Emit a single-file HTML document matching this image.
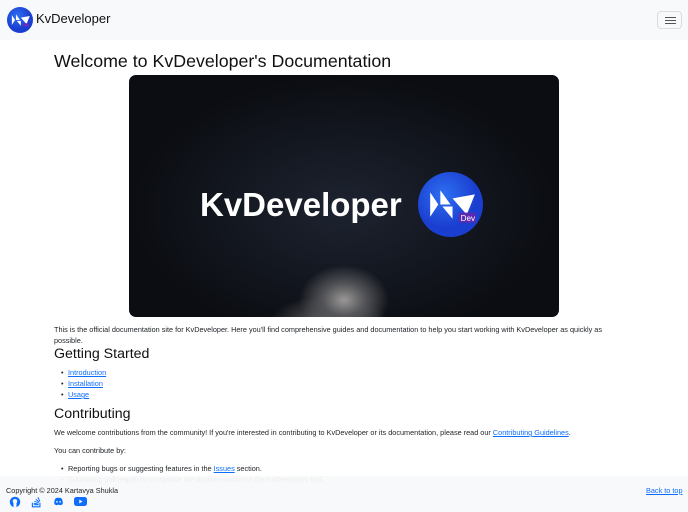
<!DOCTYPE html>
<html><head><meta charset="utf-8"><style>
*{box-sizing:border-box;margin:0;padding:0}
html,body{width:688px;height:512px;overflow:hidden;background:#fff;font-family:"Liberation Sans",sans-serif;color:#212529}
.nav{position:absolute;left:0;top:0;width:688px;height:40px;background:#f8f9fa}
.logo{position:absolute;left:7px;top:7px;width:26px;height:26px}
.brand{position:absolute;left:36px;top:11px;font-size:13px;color:#111}
.tog{position:absolute;left:657px;top:11px;width:25px;height:18px;border:1px solid #dcdcdc;border-radius:4px}
.tog i{position:absolute;left:7px;width:11px;height:1.3px;background:#555}
h1{position:absolute;left:54px;top:51px;font-size:17.8px;font-weight:400;color:#111}
.hero{position:absolute;left:129px;top:75px;width:430px;height:242px;border-radius:7px;overflow:hidden;background:radial-gradient(ellipse 45px 35px at 215px 225px,#9a9896 0%,#55565a 45%,transparent 100%),radial-gradient(ellipse 60px 30px at 200px 250px,#6a6a6a 0%,transparent 100%),radial-gradient(ellipse at 50% 55%,#1d2330,#0b0d12 70%)}
.hero .t{position:absolute;left:71px;top:111px;font-size:33px;font-weight:700;color:#fff}
.hero svg{position:absolute;left:289px;top:97px;width:65px;height:65px}
.p{position:absolute;left:54px;font-size:7.3px;line-height:11px}
h2{position:absolute;left:54px;font-size:14.2px;font-weight:400;color:#111}
a{color:#0d6efd;text-decoration:underline}
ul{position:absolute;left:68px;font-size:7.3px;line-height:11px;list-style:none}
ul li:before{content:"•";position:absolute;left:-7px}
.foot{position:absolute;left:0;top:476px;width:688px;height:36px;background:rgba(248,249,250,.95)}
.foot .c{position:absolute;left:6px;top:10px;font-size:7.3px}
.foot .b{position:absolute;left:646px;top:10px;font-size:7.3px}
.ic{position:absolute;top:21px;width:11px;height:9px}
</style></head><body>
<div class="nav"><svg class="logo" viewBox="0 0 64 64"><defs><radialGradient id="g" cx=".4" cy=".35"><stop offset="0" stop-color="#2e6ff2"/><stop offset="1" stop-color="#1a3fd0"/></radialGradient></defs><circle cx="32" cy="32" r="32" fill="url(#g)"/><path d="M12 20l8 12-8 12zM22 18l10 14-10 0zM24 34l10 0 0 12zM34 26l22-4-8 20z" fill="#fff"/><rect x="40" y="40" width="14" height="8" rx="2" fill="#6a2bc0"/></svg><div class="brand">KvDeveloper</div>
<div class="tog"><i style="top:5px"></i><i style="top:8px"></i><i style="top:11px"></i></div></div>
<h1>Welcome to KvDeveloper's Documentation</h1>
<div class="hero"><div class="t">KvDeveloper</div>
<svg viewBox="0 0 64 64"><circle cx="32" cy="32" r="32" fill="url(#g)"/><path d="M12 20l8 12-8 12zM22 18l10 14-10 0zM24 34l10 0 0 12zM34 26l22-4-8 20z" fill="#fff"/><rect x="40" y="40" width="17" height="10" rx="2" fill="#5a2bb0"/><text x="42" y="48" font-size="8" fill="#fff" font-family="Liberation Sans">Dev</text></svg></div>
<div class="p" style="top:324px;width:570px">This is the official documentation site for KvDeveloper. Here you'll find comprehensive guides and documentation to help you start working with KvDeveloper as quickly as possible.</div>
<h2 style="top:346px">Getting Started</h2>
<ul style="top:367px"><li><a>Introduction</a></li><li><a>Installation</a></li><li><a>Usage</a></li></ul>
<h2 style="top:406px">Contributing</h2>
<div class="p" style="top:427px">We welcome contributions from the community! If you're interested in contributing to KvDeveloper or its documentation, please read our <a>Contributing Guidelines</a>.</div>
<div class="p" style="top:445px">You can contribute by:</div>
<ul style="top:463px"><li>Reporting bugs or suggesting features in the <a>Issues</a> section.</li><li>Submitting pull requests to improve the documentation or the KvDeveloper tool.</li></ul>
<div class="foot"><div class="c">Copyright © 2024 Kartavya Shukla</div><div class="b"><a>Back to top</a></div>
<svg class="ic" style="left:9px;width:12px;height:12px;top:20px" viewBox="0 0 16 16"><circle cx="8" cy="8" r="7" fill="#0d6efd"/><circle cx="8" cy="7" r="3" fill="#f8f9fa"/><rect x="6" y="9" width="4" height="6" fill="#f8f9fa"/></svg>
<svg class="ic" style="left:31px;height:12px;top:20px" viewBox="0 0 16 16"><path d="M2 9v6h11V9" stroke="#0d6efd" stroke-width="1.6" fill="none"/><path d="M4 12h7M4 10l7 1M5 7l6 2M7 4l5 4M10 1l3 6" stroke="#0d6efd" stroke-width="1.4"/></svg>
<svg class="ic" style="left:53px" viewBox="0 0 16 12"><path d="M2 10Q1 5 4 1L7 0.5h2L12 1Q15 5 14 10L11 11.5 8 10.5 5 11.5Z" fill="#0d6efd"/><circle cx="5.7" cy="6.5" r="1.2" fill="#f8f9fa"/><circle cx="10.3" cy="6.5" r="1.2" fill="#f8f9fa"/></svg>
<svg class="ic" style="left:74px;width:13px" viewBox="0 0 16 11"><rect width="16" height="11" rx="3" fill="#0d6efd"/><path d="M6.5 3v5l4-2.5z" fill="#f8f9fa"/></svg>
</div>
</body></html>
